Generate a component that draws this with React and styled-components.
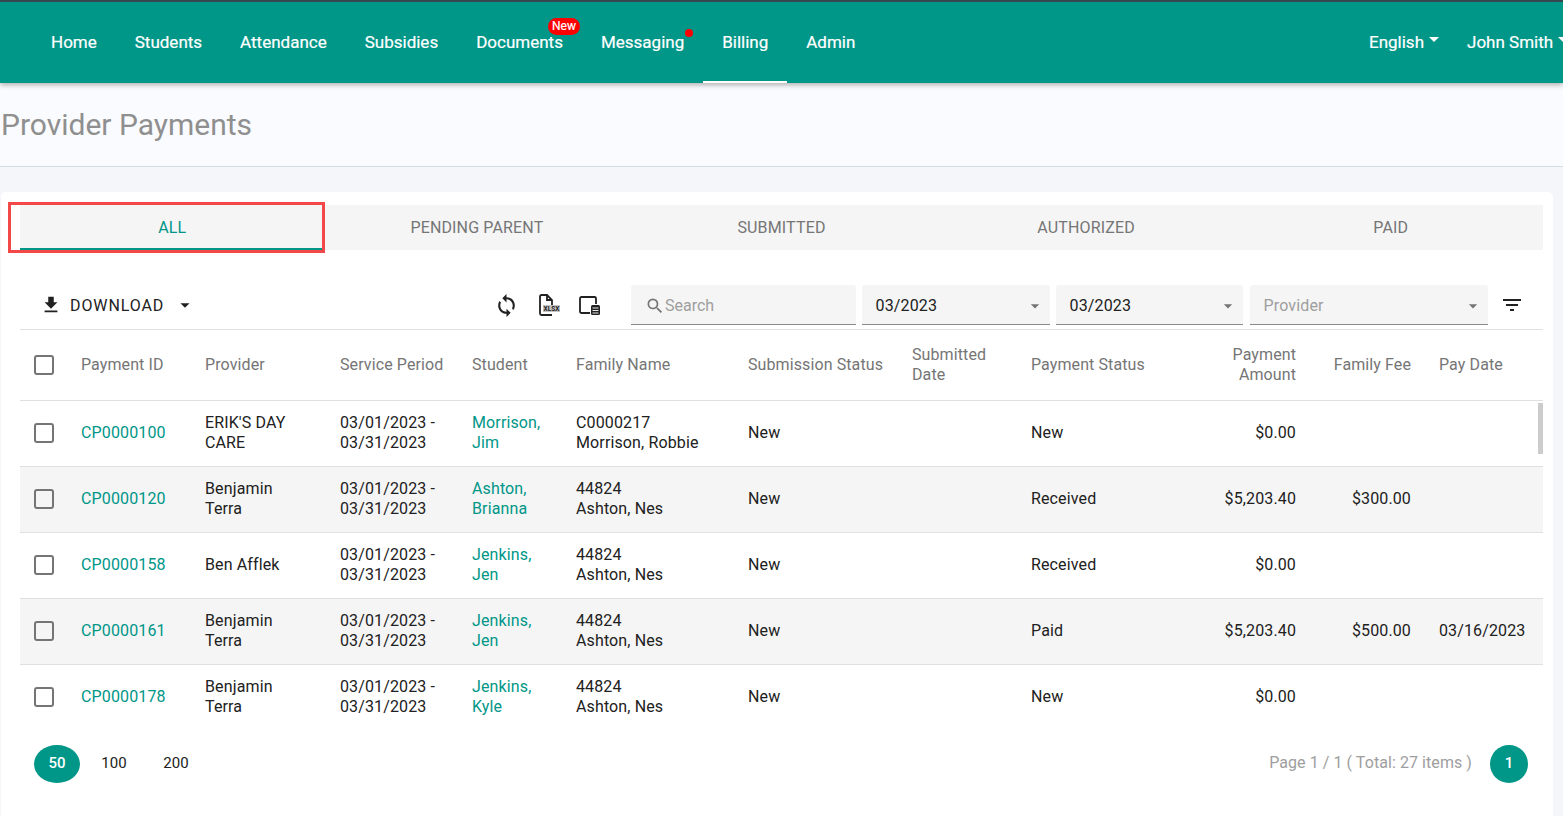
import React from "react";
import styled, { createGlobalStyle } from "styled-components";
import { MdFileDownload, MdSync, MdFilterList, MdSearch, MdArrowDropDown } from "react-icons/md";

const teal = "#009688";

const GlobalStyle = createGlobalStyle`
  html, body {
    margin: 0;
    padding: 0;
    height: 100%;
    overflow: hidden;
    background: #f4f6fa;
    font-family: Roboto, "Liberation Sans", sans-serif;
    font-size: 16px;
    color: #212121;
  }
  * { box-sizing: border-box; }
`;

// custom toolbar glyphs, no package has these two
const XlsxIcon = () => (
  <svg width="24" height="24" viewBox="0 0 24 24" fill="none">
    <path d="M15 12V7l-5-5H4.500A1.500 1.500 0 0 0 3 3.500v17A1.500 1.500 0 0 0 4.500 22H15" stroke="#212121" strokeWidth="1.800" />
    <path d="M10 2v5h5" stroke="#212121" strokeWidth="1.800" />
    <rect x="6" y="12" width="17" height="7" fill="#c4c4c4" />
    <text x="14.500" y="18" fontSize="6.500" fontWeight="700" fill="#212121" textAnchor="middle" fontFamily="Roboto">XLSX</text>
  </svg>
);

const ColumnsIcon = () => (
  <svg width="24" height="24" viewBox="0 0 24 24" fill="none">
    <path d="M13 20H4.500A1.500 1.500 0 0 1 3 18.500v-13A1.500 1.500 0 0 1 4.500 4h13A1.500 1.500 0 0 1 19 5.500V11" stroke="#212121" strokeWidth="1.800" />
    <rect x="14" y="12" width="9" height="10" rx="1.500" fill="#212121" />
    <path d="M15.500 15h6M15.500 17.500h6M15.500 20h6" stroke="#fff" strokeWidth="0.900" />
  </svg>
);

const NAV = ["Home", "Students", "Attendance", "Subsidies", "Documents", "Messaging", "Billing", "Admin"];
const TABS = ["ALL", "PENDING PARENT", "SUBMITTED", "AUTHORIZED", "PAID"];

const ROWS = [
  { id: "CP0000100", provider: ["ERIK'S DAY", "CARE"], student: ["Morrison,", "Jim"], family: ["C0000217", "Morrison, Robbie"], sub: "New", status: "New", amount: "$0.00", fee: "", date: "" },
  { id: "CP0000120", provider: ["Benjamin", "Terra"], student: ["Ashton,", "Brianna"], family: ["44824", "Ashton, Nes"], sub: "New", status: "Received", amount: "$5,203.40", fee: "$300.00", date: "" },
  { id: "CP0000158", provider: ["Ben Afflek"], student: ["Jenkins,", "Jen"], family: ["44824", "Ashton, Nes"], sub: "New", status: "Received", amount: "$0.00", fee: "", date: "" },
  { id: "CP0000161", provider: ["Benjamin", "Terra"], student: ["Jenkins,", "Jen"], family: ["44824", "Ashton, Nes"], sub: "New", status: "Paid", amount: "$5,203.40", fee: "$500.00", date: "03/16/2023" },
  { id: "CP0000178", provider: ["Benjamin", "Terra"], student: ["Jenkins,", "Kyle"], family: ["44824", "Ashton, Nes"], sub: "New", status: "New", amount: "$0.00", fee: "", date: "" },
];

const Lines = ({ items }) => items.map((t) => <div key={t}>{t}</div>);

export default function App() {
  return (
    <>
      <GlobalStyle />
      <Header>
        <NavList>
          {NAV.map((n) => (
            <NavItem key={n} $active={n === "Billing"}>
              {n}
              {n === "Documents" && <NewBadge>New</NewBadge>}
              {n === "Messaging" && <Dot />}
            </NavItem>
          ))}
        </NavList>
        <NavRight>
          <Menu>English</Menu>
          <Menu>John Smith</Menu>
        </NavRight>
      </Header>

      <TitleBar>
        <Title>Provider Payments</Title>
      </TitleBar>

      <Card>
        <Tabs>
          {TABS.map((t, i) => (
            <Tab key={t} $active={i === 0}>{t}</Tab>
          ))}
          <Highlight />
        </Tabs>

        <Toolbar>
          <Download>
            <MdFileDownload size={22} />
            <span>DOWNLOAD</span>
            <MdArrowDropDown size={22} />
          </Download>
          <ToolIcons>
            <MdSync size={25} color="#212121" />
            <XlsxIcon />
            <ColumnsIcon />
          </ToolIcons>
          <SearchField>
            <MdSearch size={20} />
            Search
          </SearchField>
          <Select $w={188} $mr={6}>03/2023<MdArrowDropDown size={20} /></Select>
          <Select $w={187} $mr={7}>03/2023<MdArrowDropDown size={20} /></Select>
          <Select $w={238} $mr={0} $placeholder>Provider<MdArrowDropDown size={20} /></Select>
          <FilterButton><MdFilterList size={24} /></FilterButton>
        </Toolbar>

        <HeadRow>
          <Cell><Check /></Cell>
          <Cell>Payment ID</Cell>
          <Cell>Provider</Cell>
          <Cell>Service Period</Cell>
          <Cell>Student</Cell>
          <Cell>Family Name</Cell>
          <Cell>Submission Status</Cell>
          <Cell>Submitted<br />Date</Cell>
          <Cell>Payment Status</Cell>
          <Cell $right>Payment<br />Amount</Cell>
          <Cell $right>Family Fee</Cell>
          <Cell>Pay Date</Cell>
        </HeadRow>

        <Body>
          {ROWS.map((r, i) => (
            <Row key={r.id} $odd={i % 2 === 1}>
              <Cell><Check /></Cell>
              <Cell><Link>{r.id}</Link></Cell>
              <Cell><Lines items={r.provider} /></Cell>
              <Cell><div>03/01/2023 -</div><div>03/31/2023</div></Cell>
              <Cell><Link><Lines items={r.student} /></Link></Cell>
              <Cell><Lines items={r.family} /></Cell>
              <Cell>{r.sub}</Cell>
              <Cell />
              <Cell>{r.status}</Cell>
              <Cell $right>{r.amount}</Cell>
              <Cell $right>{r.fee}</Cell>
              <Cell>{r.date}</Cell>
            </Row>
          ))}
          <Thumb />
        </Body>

        <Pager>
          <Sizes>
            <SizeBtn $active>50</SizeBtn>
            <SizeBtn>100</SizeBtn>
            <SizeBtn>200</SizeBtn>
          </Sizes>
          <PageInfo>
            <PageText>Page 1 / 1 ( Total: 27 items )</PageText>
            <PageBtn>1</PageBtn>
          </PageInfo>
        </Pager>
      </Card>
    </>
  );
}

const Header = styled.header`
  position: relative;
  z-index: 2;
  display: flex;
  height: 83px;
  padding-left: 32px;
  background: ${teal};
  border-top: 2px solid #37474f;
  box-shadow: 0 2px 5px rgba(0, 0, 0, 0.3);
  color: #fff;
  white-space: nowrap;
  -webkit-text-stroke: 0.2px #fff;
`;

const NavList = styled.nav`
  display: flex;
  flex: 0 0 1337px;
`;

const NavItem = styled.a`
  position: relative;
  display: flex;
  align-items: center;
  padding: 0 19px;
  font-size: 17px;
  border-bottom: 2px solid ${({ $active }) => ($active ? "#fff" : "transparent")};
`;

const NewBadge = styled.span`
  position: absolute;
  top: 16px;
  right: 2px;
  height: 17px;
  padding: 0 4px;
  border-radius: 9px;
  background: #f00;
  font-size: 12px;
  line-height: 17px;
`;

const Dot = styled.span`
  position: absolute;
  top: 27px;
  right: 10px;
  width: 8px;
  height: 8px;
  border-radius: 50%;
  background: #f00;
`;

const NavRight = styled.div`
  display: flex;
  flex-shrink: 0;
  align-items: center;
  gap: 28px;
  padding-bottom: 2px;
`;

const Menu = styled.a`
  display: flex;
  align-items: center;
  font-size: 17px;
  &::after {
    content: "";
    margin: -4px 0 0 5px;
    border-top: 5px solid #fff;
    border-left: 5px solid transparent;
    border-right: 5px solid transparent;
  }
`;

const TitleBar = styled.div`
  height: 84px;
  padding: 0 1px;
  display: flex;
  align-items: center;
  background: #fafbfe;
  border-bottom: 1px solid #d3dde6;
`;

const Title = styled.h1`
  margin: 0;
  font-size: 30px;
  font-weight: 400;
  color: #8f8f8f;
`;

const Card = styled.main`
  height: 640px;
  margin: 25px 10px 0 1px;
  padding: 13px 10px 0 19px;
  background: #fff;
  border-radius: 5px 5px 0 0;
`;

const Tabs = styled.div`
  position: relative;
  display: grid;
  grid-template-columns: repeat(5, 1fr);
  height: 45px;
  background: #f5f5f5;
`;

const Tab = styled.div`
  display: flex;
  align-items: center;
  justify-content: center;
  padding-top: 2px;
  color: ${({ $active }) => ($active ? teal : "#757575")};
  border-bottom: 2px solid ${({ $active }) => ($active ? teal : "transparent")};
  letter-spacing: 0.15px;
`;

const Highlight = styled.div`
  position: absolute;
  top: -3px;
  left: -12px;
  width: 317px;
  height: 51px;
  border: 3px solid #f44848;
  pointer-events: none;
`;

const Toolbar = styled.div`
  display: flex;
  align-items: flex-start;
  height: 80px;
  padding-top: 35px;
  border-bottom: 1px solid #e0e0e0;
`;

const Download = styled.div`
  display: flex;
  align-items: center;
  height: 40px;
  width: 474px;
  padding-left: 20px;
  letter-spacing: 0.9px;
  span {
    margin: 0 10px 0 8px;
  }
`;

const ToolIcons = styled.div`
  display: flex;
  align-items: center;
  gap: 16px;
  width: 137px;
  height: 40px;
  svg:first-child {
    margin-right: 2px;
  }
`;

const fieldBase = `
  display: flex;
  align-items: center;
  height: 40px;
  padding-top: 2px;
  background: #f5f5f5;
  border-bottom: 1px solid #8a8a8a;
  border-radius: 3px 3px 0 0;
`;

const SearchField = styled.div`
  ${fieldBase}
  width: 225px;
  margin-right: 6px;
  padding-left: 14px;
  color: #9e9e9e;
  svg { color: #757575; }
`;

const Select = styled.div`
  ${fieldBase}
  justify-content: space-between;
  width: ${({ $w }) => $w}px;
  margin-right: ${({ $mr }) => $mr}px;
  padding-left: 13.5px;
  padding-right: 5px;
  color: ${({ $placeholder }) => ($placeholder ? "#9e9e9e" : "#212121")};
  letter-spacing: 0.15px;
  svg { color: #757575; }
`;

const FilterButton = styled.div`
  display: flex;
  align-items: center;
  justify-content: flex-end;
  width: 36px;
  height: 40px;
`;

const columns = "47px 124px 135px 132px 104px 172px 164px 119px 188px 105px 115px 118px";

const HeadRow = styled.div`
  display: grid;
  grid-template-columns: ${columns};
  align-items: center;
  height: 71px;
  color: #757575;
  border-bottom: 1px solid #e0e0e0;
  letter-spacing: 0.1px;
`;

const Body = styled.div`
  position: relative;
  height: 329px;
  overflow: hidden;
`;

const Row = styled.div`
  display: grid;
  grid-template-columns: ${columns};
  align-items: center;
  height: 66px;
  padding-bottom: 2px;
  background: ${({ $odd }) => ($odd ? "#f5f5f5" : "#fff")};
  border-bottom: 1px solid #e0e0e0;
  letter-spacing: 0.13px;
`;

const Cell = styled.div`
  padding: 0 14px;
  line-height: 20px;
  white-space: nowrap;
  text-align: ${({ $right }) => ($right ? "right" : "left")};
`;

const Check = styled.div`
  width: 20px;
  height: 20px;
  border: 2px solid #757575;
  border-radius: 3px;
`;

const Link = styled.a`
  color: ${teal};
`;

const Thumb = styled.div`
  position: absolute;
  top: 2px;
  right: 0;
  width: 5px;
  height: 51px;
  background: #ccc;
`;

const Pager = styled.div`
  display: flex;
  align-items: center;
  justify-content: space-between;
  height: 68px;
  padding: 0 15px 0 14px;
`;

const Sizes = styled.div`
  display: flex;
  align-items: center;
`;

const SizeBtn = styled.div`
  display: flex;
  align-items: center;
  justify-content: center;
  width: ${({ $active }) => ($active ? "46px" : "62px")};
  height: 38px;
  margin-right: ${({ $active }) => ($active ? "3px" : "0")};
  padding-bottom: 2px;
  border-radius: 50%;
  background: ${({ $active }) => ($active ? teal : "transparent")};
  color: ${({ $active }) => ($active ? "#fff" : "#212121")};
  font-size: 15px;
  font-weight: ${({ $active }) => ($active ? 500 : 400)};
`;

const PageInfo = styled.div`
  display: flex;
  align-items: center;
  gap: 18px;
`;

const PageText = styled.span`
  padding-bottom: 4px;
  color: #9e9e9e;
  letter-spacing: 0.07px;
`;

const PageBtn = styled.div`
  display: flex;
  align-items: center;
  justify-content: center;
  width: 38px;
  height: 38px;
  padding-bottom: 2px;
  border-radius: 50%;
  background: ${teal};
  color: #fff;
  font-size: 15px;
  font-weight: 500;
`;
